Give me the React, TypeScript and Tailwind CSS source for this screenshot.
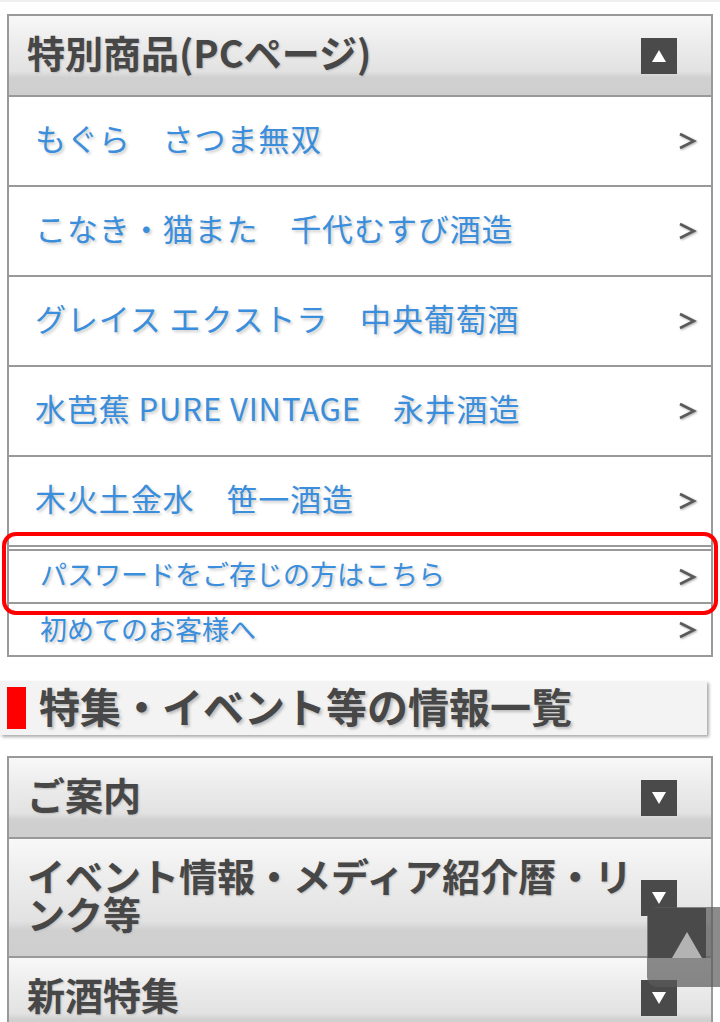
import React from 'react';

const font = { fontFamily: '"Noto Sans CJK JP", "Noto Sans", sans-serif' };

function Triangle({ up }: { up?: boolean }) {
  return (
    <span className="flex h-[36px] w-[36px] shrink-0 items-center justify-center bg-[#4a4a4a]">
      <svg width="14" height="12" viewBox="0 0 14 12">
        {up ? <polygon points="7,0 14,12 0,12" fill="#fff" /> : <polygon points="0,0 14,0 7,12" fill="#fff" />}
      </svg>
    </span>
  );
}

function Header({ title, up }: { title: string; up?: boolean }) {
  return (
    <div className="flex items-center justify-between bg-[linear-gradient(#f8f8f8,#ececec_35%,#e2e2e2_70%,#d0d0d0_78%,#cecece)] pb-[20px] pl-[18px] pr-[34px] pt-[21px]">
      <span className="max-w-[620px] -translate-y-[4px] text-[38px] font-bold leading-[38px] text-[#474747] [text-shadow:1px_1px_2px_#bbb]">
        {title}
      </span>
      <Triangle up={up} />
    </div>
  );
}

function Chevron() {
  return (
    <svg width="19" height="20" viewBox="0 0 19 20" className="shrink-0 [filter:drop-shadow(1px_1px_1px_#aaa)]">
      <polyline points="2,3 16,10 2,17" fill="none" stroke="#5a5a5a" strokeWidth="2.6" />
    </svg>
  );
}

const items = [
  'もぐら　さつま無双',
  'こなき・猫また　千代むすび酒造',
  'グレイス エクストラ　中央葡萄酒',
  '水芭蕉 PURE VINTAGE　永井酒造',
  '木火土金水　笹一酒造',
];

export default function App() {
  return (
    <div className="relative h-[1022px] w-[720px] overflow-hidden bg-white" style={font}>
      <div className="h-[2px] bg-[#f0f0f0]" />

      {/* 特別商品 */}
      <div className="ml-[7px] mt-[12px] w-[706px] border-2 border-[#999]">
        <div className="border-b-2 border-[#999]">
          <Header title="特別商品(PCページ)" up />
        </div>
        {items.map((t) => (
          <div key={t} className="flex h-[90px] items-center justify-between border-b-2 border-[#999] pl-[26px] pr-[14px]">
            <span className="-translate-y-[4px] text-[31px] leading-none tracking-[0.9px] text-[#3a8edb] [text-shadow:2px_2px_3px_#ccc]">{t}</span>
            <Chevron />
          </div>
        ))}
        <div className="mt-[2px] flex h-[55px] items-center justify-between border-y-2 border-[#999] pl-[31px] pr-[14px]">
          <span className="-translate-y-[3px] text-[27px] leading-none text-[#3a8edb] [text-shadow:2px_2px_3px_#ccc]">パスワードをご存じの方はこちら</span>
          <Chevron />
        </div>
        <div className="flex h-[51px] items-center justify-between pl-[31px] pr-[14px]">
          <span className="-translate-y-[1px] text-[27px] leading-none text-[#3a8edb] [text-shadow:2px_2px_3px_#ccc]">初めてのお客様へ</span>
          <Chevron />
        </div>
      </div>

      {/* 見出し */}
      <div className="mt-[24px] flex h-[54px] w-[707px] items-center gap-[13px] bg-[#f3f3f3] pl-[7px] shadow-[2px_2px_3px_#aaa]">
        <span className="h-[42px] w-[19px] shrink-0 bg-[#f00]" />
        <span className="-translate-y-[3px] text-[41px] font-bold leading-none text-[#474747] [text-shadow:2px_2px_3px_#bbb]">
          特集・イベント等の情報一覧
        </span>
      </div>

      {/* 特集 */}
      <div className="ml-[7px] mt-[21px] w-[706px] border-2 border-[#999]">
        <div className="border-b-2 border-[#999]">
          <Header title="ご案内" />
        </div>
        <div className="border-b-2 border-[#999]">
          <Header title="イベント情報・メディア紹介暦・リンク等" />
        </div>
        <Header title="新酒特集" />
      </div>

      {/* page top button */}
      <div className="absolute left-[647px] top-[907px] h-[80px] w-[84px] overflow-hidden rounded-[10px] bg-[rgba(90,90,90,0.7)]">
        <div className="ml-[1px] mt-[1px] flex h-[50px] w-[58px] items-end justify-end bg-[#4a4a4a] pr-[4px]">
          <svg width="30" height="26" viewBox="0 0 30 26">
            <polygon points="15,0 30,26 0,26" fill="#b3b3b3" />
          </svg>
        </div>
      </div>

      {/* 注目枠 */}
      <div className="absolute left-[2px] top-[532px] h-[83px] w-[716px] rounded-[14px] border-4 border-[#f00]" />
    </div>
  );
}
